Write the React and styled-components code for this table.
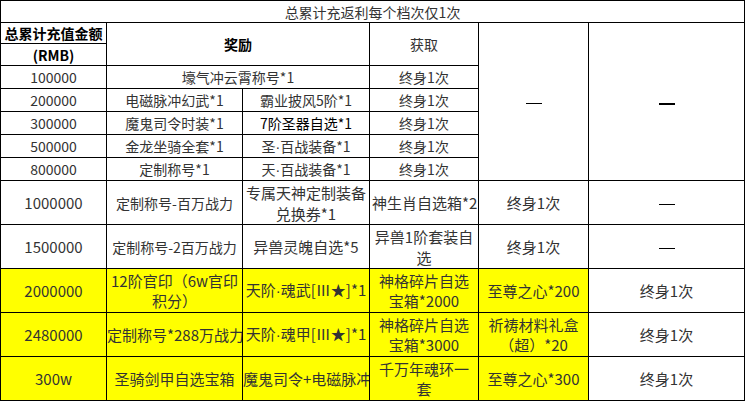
import React from 'react';
import styled, { createGlobalStyle } from 'styled-components';

const GlobalStyle = createGlobalStyle`
  html, body {
    margin: 0;
    padding: 0;
    background: #ffffff;
  }
  body {
    font-family: "Noto Sans CJK SC", "Noto Sans", sans-serif;
  }
`;

const Sheet = styled.table`
  border-collapse: collapse;
  table-layout: fixed;
  width: 744px;
  color: #333333;
`;

const Row = styled.tr`
  height: ${(p) => p.$h}px;
`;

const Cell = styled.td`
  border: 1px solid #000000;
  padding: 0 ${(p) => (p.$tight ? 0 : 2)}px;
  text-align: center;
  vertical-align: middle;
  font-size: ${(p) => p.$size || 14}px;
  line-height: ${(p) => p.$lh || 18}px;
  font-weight: ${(p) => (p.$bold ? 700 : 400)};
  color: ${(p) => (p.$black ? '#000000' : '#333333')};
  background: ${(p) => (p.$yellow ? '#ffff00' : '#ffffff')};
  white-space: nowrap;
  overflow: hidden;
`;

const Dot = styled.span`
  font-family: "Liberation Sans", sans-serif;
`;

const Dash = styled.span`
  display: inline-block;
  width: 16px;
  height: ${(p) => (p.$bold ? 2 : 1)}px;
  background: #000000;
  vertical-align: middle;
`;

const topRows = [
  ['200000', '电磁脉冲幻武*1', '霸业披风5阶*1'],
  ['300000', '魔鬼司令时装*1', '7阶圣器自选*1', true],
  ['500000', '金龙坐骑全套*1', <>圣<Dot>·</Dot>百战装备*1</>],
  ['800000', '定制称号*1', <>天<Dot>·</Dot>百战装备*1</>],
];

export default function App() {
  return (
    <>
      <GlobalStyle />
      <Sheet>
        <colgroup>
          <col style={{ width: 106 }} />
          <col style={{ width: 136 }} />
          <col style={{ width: 127 }} />
          <col style={{ width: 109 }} />
          <col style={{ width: 110 }} />
          <col style={{ width: 156 }} />
        </colgroup>
        <tbody>
          <Row $h={22}>
            <Cell colSpan={6}>总累计充返利每个档次仅1次</Cell>
          </Row>
          <Row $h={21}>
            <Cell $bold $black>总累计充值金额</Cell>
            <Cell colSpan={2} rowSpan={2} $bold $black>奖励</Cell>
            <Cell rowSpan={2}>获取</Cell>
            <Cell rowSpan={7}><Dash /></Cell>
            <Cell rowSpan={7}><Dash $bold /></Cell>
          </Row>
          <Row $h={22}>
            <Cell $bold $black>(RMB)</Cell>
          </Row>
          <Row $h={23}>
            <Cell>100000</Cell>
            <Cell colSpan={2}>壕气冲云霄称号*1</Cell>
            <Cell>终身1次</Cell>
          </Row>
          {topRows.map(([amount, a, b, dark]) => (
            <Row $h={23} key={amount}>
              <Cell>{amount}</Cell>
              <Cell>{a}</Cell>
              <Cell $black={dark}>{b}</Cell>
              <Cell>终身1次</Cell>
            </Row>
          ))}
          <Row $h={44}>
            <Cell $size={15}>1000000</Cell>
            <Cell>定制称号-百万战力</Cell>
            <Cell $size={15} $lh={21}>专属天神定制装备<br />兑换券*1</Cell>
            <Cell $size={15}>神生肖自选箱*2</Cell>
            <Cell $size={15}>终身1次</Cell>
            <Cell><Dash /></Cell>
          </Row>
          <Row $h={44}>
            <Cell $size={15}>1500000</Cell>
            <Cell>定制称号-2百万战力</Cell>
            <Cell $size={15}>异兽灵魄自选*5</Cell>
            <Cell $size={15} $lh={21}>异兽1阶套装自<br />选</Cell>
            <Cell $size={15}>终身1次</Cell>
            <Cell><Dash /></Cell>
          </Row>
          <Row $h={44}>
            <Cell $yellow $size={15}>2000000</Cell>
            <Cell $yellow $size={15} $lh={20}>12阶官印（6w官印<br />积分）</Cell>
            <Cell $yellow $size={15} $tight>天阶<Dot>·</Dot>魂武[Ⅲ★]*1</Cell>
            <Cell $yellow $size={15} $lh={20}>神格碎片自选<br />宝箱*2000</Cell>
            <Cell $yellow $size={15}>至尊之心*200</Cell>
            <Cell $size={15}>终身1次</Cell>
          </Row>
          <Row $h={44}>
            <Cell $yellow $size={15}>2480000</Cell>
            <Cell $yellow $size={15} $tight>定制称号*288万战力</Cell>
            <Cell $yellow $size={15} $tight>天阶<Dot>·</Dot>魂甲[Ⅲ★]*1</Cell>
            <Cell $yellow $size={15} $lh={20}>神格碎片自选<br />宝箱*3000</Cell>
            <Cell $yellow $size={15} $lh={20}>祈祷材料礼盒<br />（超）*20</Cell>
            <Cell $size={15}>终身1次</Cell>
          </Row>
          <Row $h={44}>
            <Cell $yellow $size={15}>300w</Cell>
            <Cell $yellow $size={15}>圣骑剑甲自选宝箱</Cell>
            <Cell $yellow $size={15} $tight>魔鬼司令+电磁脉冲</Cell>
            <Cell $yellow $size={15} $lh={20}>千万年魂环一<br />套</Cell>
            <Cell $yellow $size={15}>至尊之心*300</Cell>
            <Cell $size={15}>终身1次</Cell>
          </Row>
        </tbody>
      </Sheet>
    </>
  );
}
